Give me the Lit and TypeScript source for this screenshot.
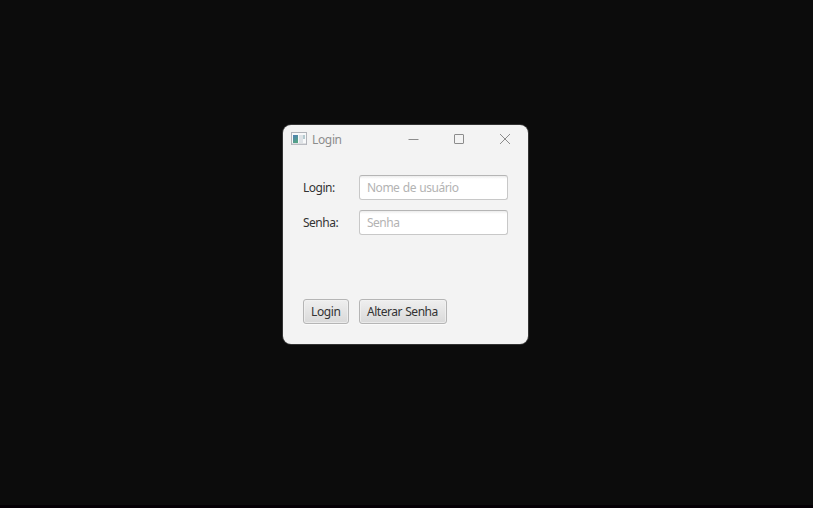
import { LitElement, html, css } from "lit";
import { customElement } from "lit/decorators.js";

@customElement("app-root")
class AppRoot extends LitElement {
  static styles = css`
    :host {
      display: block;
      height: 508px;
      box-sizing: border-box;
      padding-top: 125px;
      background: linear-gradient(#0c0c0c 505px, #050005 505px);
      font: 12px/17px "Noto Sans", "Open Sans", sans-serif;
      color: #333;
      overflow: hidden;
    }
    .window {
      width: 245px;
      height: 219px;
      margin-left: 283px;
      border-radius: 8px;
      background: #f3f3f3;
      box-shadow: 0 0 0 1px #333;
      box-sizing: border-box;
    }
    .titlebar {
      display: flex;
      height: 28px;
      padding-left: 8px;
      align-items: center;
      color: #8c8c8c;
      box-sizing: border-box;
    }
    .titlebar svg { display: block; flex: none; }
    .title { flex: 1; margin-left: 5px; padding-top: 1px; }
    .control { width: 46px; height: 28px; }
    .text { display: inline-block; white-space: nowrap; letter-spacing: -0.5px; }
    .title .text { letter-spacing: -0.35px; }
    .form {
      display: grid;
      grid-template-columns: 46px 149px;
      grid-template-rows: 25px 25px;
      gap: 10px;
      padding: 22px 20px 0;
      align-items: center;
    }
    .field {
      box-sizing: border-box;
      width: 149px;
      height: 25px;
      padding: 3px 7px;
      border: 1px solid #c8c8c8;
      border-top-color: #b5b5b5;
      border-radius: 3px;
      background: linear-gradient(#ececec, #fff 3px);
      font: inherit;
      letter-spacing: -0.5px;
      word-spacing: 0.8px;
      color: #333;
      outline: none;
    }
    .field::placeholder { color: #b3b3b3; opacity: 1; }
    .actions { display: flex; gap: 10px; padding: 64px 20px 0; }
    .button {
      box-sizing: border-box;
      height: 25px;
      padding: 0 0 0 6px;
      border: 1px solid #b5b5b5;
      border-radius: 3px;
      background: linear-gradient(#efefef, #d9d9d9);
      box-shadow: inset 0 0 0 1px #f3f3f3aa, 0 1px 0 #fafafa;
      font: inherit;
      color: #333;
      text-align: left;
      white-space: nowrap;
      letter-spacing: -0.45px;
      word-spacing: 0.4px;
    }
    .login { width: 46px; padding-left: 7px; letter-spacing: -0.4px; }
    .change { width: 88px; padding-left: 7px; }
  `;

  render() {
    return html`
      <div class="window">
        <div class="titlebar">
          <svg width="16" height="16" viewBox="0 0 16 16">
            <defs>
              <linearGradient id="pane" x2="0.4" y2="1">
                <stop stop-color="#4f7fb5" /><stop offset="1" stop-color="#55a385" />
              </linearGradient>
            </defs>
            <rect x=".5" y="1.5" width="15" height="12" fill="#f8f9fa" stroke="#b2b4ba" />
            <path d="M1 13h14" stroke="#c2c4c9" />
            <rect x="2" y="4" width="5" height="8" fill="url(#pane)" />
            <rect x="8" y="4" width="4" height="8" fill="#dfe3e7" />
            <rect x="12" y="4" width="2" height="4" fill="#b5cbd0" />
          </svg>
          <span class="title"><span class="text">Login</span></span>
          <svg class="control" viewBox="0 0 46 28"><path d="M18.5 14.5h10" stroke="#8c8c8c" /></svg>
          <svg class="control" viewBox="0 0 46 28"><rect x="18.5" y="9.5" width="9" height="9" rx=".5" fill="none" stroke="#8c8c8c" /></svg>
          <svg class="control" viewBox="0 0 46 28"><path d="M18 9l10 10M28 9L18 19" stroke="#8c8c8c" /></svg>
        </div>
        <div class="form">
          <span class="text">Login:</span>
          <input class="field" placeholder="Nome de usuário" />
          <span class="text">Senha:</span>
          <input class="field" type="password" placeholder="Senha" />
        </div>
        <div class="actions">
          <button class="button login">Login</button>
          <button class="button change">Alterar Senha</button>
        </div>
      </div>
    `;
  }
}
